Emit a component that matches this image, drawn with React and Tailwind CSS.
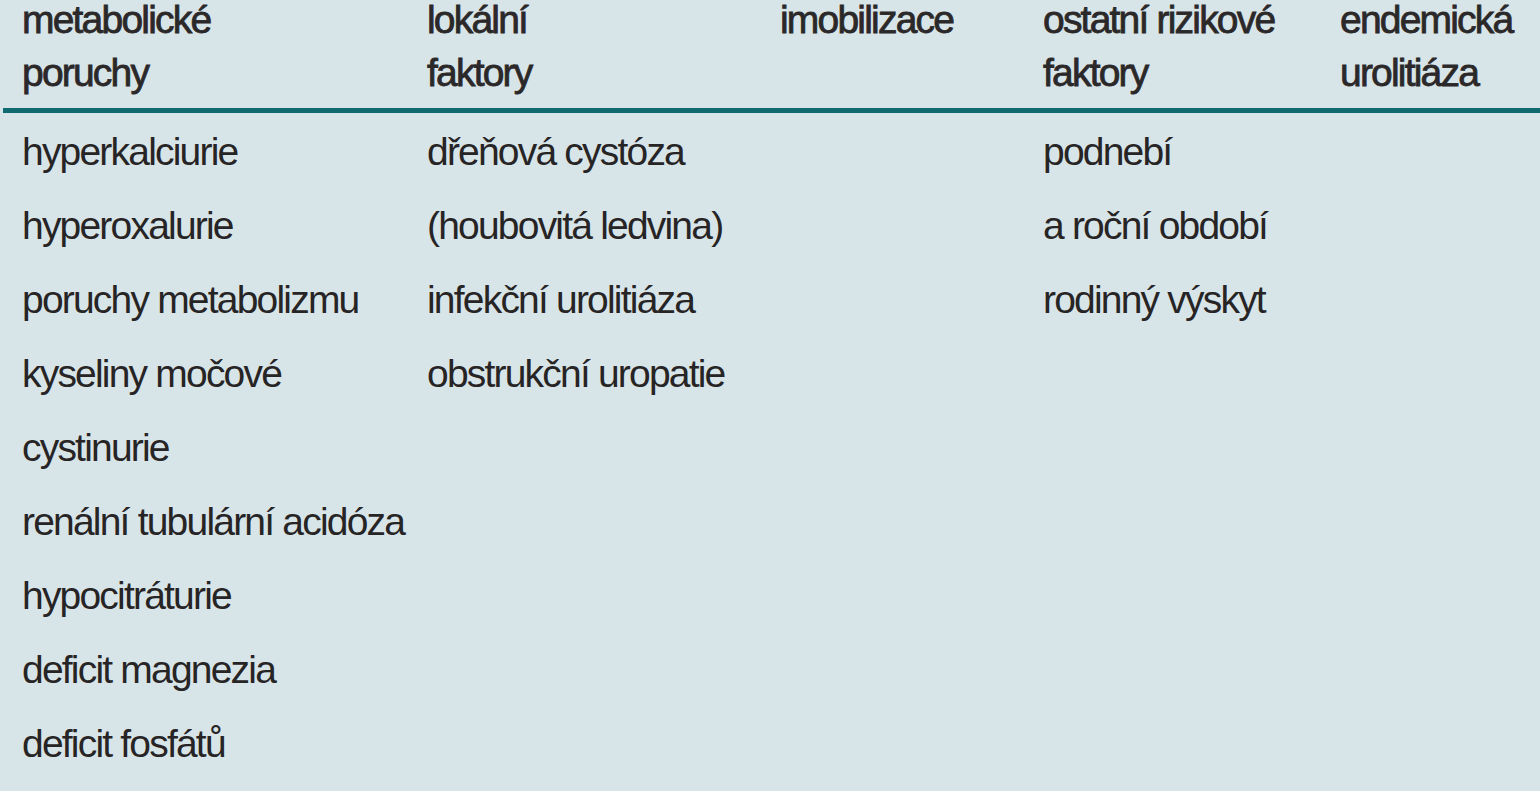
const headers = [
    ['metabolické', 'poruchy'],
    ['lokální', 'faktory'],
    ['imobilizace'],
    ['ostatní rizikové', 'faktory'],
    ['endemická', 'urolitiáza'],
];

const columns = [
    ['hyperkalciurie', 'hyperoxalurie', 'poruchy metabolizmu', 'kyseliny močové', 'cystinurie', 'renální tubulární acidóza', 'hypocitráturie', 'deficit magnezia', 'deficit fosfátů'],
    ['dřeňová cystóza', '(houbovitá ledvina)', 'infekční urolitiáza', 'obstrukční uropatie'],
    [],
    ['podnebí', 'a roční období', 'rodinný výskyt'],
    [],
];

const grid = 'grid grid-cols-[405px_353px_263px_297px_200px] pl-[22px]';

export default function App() {
    return (
        <div className="w-[1540px] h-[800px] bg-white overflow-hidden">
            <div
                className="h-[791px] bg-[#d8e5e8] text-[#272425] overflow-hidden"
                style={{ fontFamily: '"Liberation Sans", Arial, sans-serif' }}
            >
                {/* header */}
                <div className={`${grid} h-[108px] pb-[15px] text-[39px] leading-[40px] tracking-[-1.8px] text-[#2b2829] [-webkit-text-stroke:0.8px_#2b2829]`}>
                    {headers.map((h, i) => (
                        <div key={i} className="flex flex-col gap-[13px]">
                            {h.map((line) => (
                                <span key={line} className="whitespace-nowrap">{line}</span>
                            ))}
                        </div>
                    ))}
                </div>
                <div className="ml-[3px] h-[5px] bg-[#0f6a70]"></div>

                {/* body */}
                <div className={`${grid} pt-[2px] text-[39px] leading-[74px] tracking-[-1.8px]`}>
                    {columns.map((col, i) => (
                        <div key={i} className="flex flex-col">
                            {col.map((item) => (
                                <span key={item} className="whitespace-nowrap">{item}</span>
                            ))}
                        </div>
                    ))}
                </div>
            </div>
        </div>
    );
}
